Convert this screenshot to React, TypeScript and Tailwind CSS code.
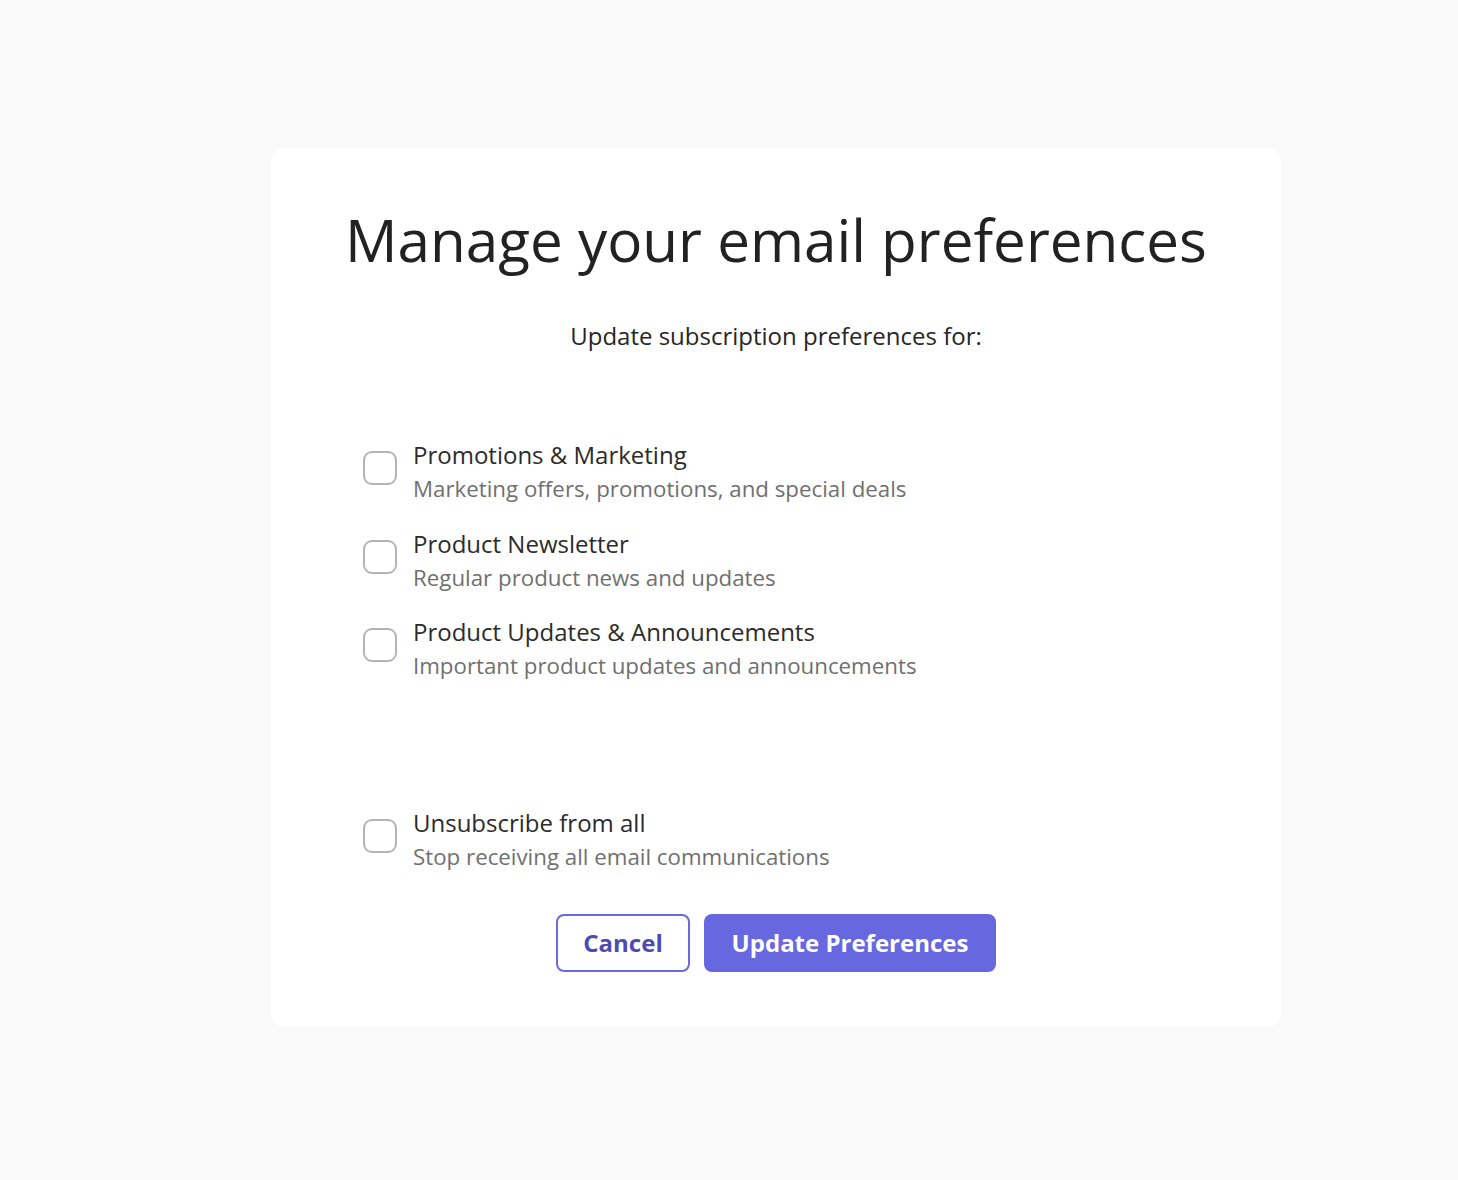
import React, { useState } from 'react';

type Pref = { id: string; title: string; description: string };

const PREFS: Pref[] = [
    { id: 'marketing', title: 'Promotions & Marketing', description: 'Marketing offers, promotions, and special deals' },
    { id: 'newsletter', title: 'Product Newsletter', description: 'Regular product news and updates' },
    { id: 'updates', title: 'Product Updates & Announcements', description: 'Important product updates and announcements' },
];

const PrefRow: React.FC<{ pref: Pref; checked: boolean; onToggle: () => void }> = ({ pref, checked, onToggle }) => (
    <label className="flex items-start gap-[16px] cursor-pointer">
        <input type="checkbox" className="sr-only" checked={checked} onChange={onToggle} />
        <span
            className={`mt-[13px] w-[34px] h-[34px] shrink-0 rounded-[9px] border-2 ${checked ? 'bg-[#6767e0] border-[#6767e0]' : 'bg-white border-[#b4b4b4]'}`}
        />
        <span className="flex flex-col">
            <span className="text-[24px] leading-[34px] text-[#2b2b2b]">{pref.title}</span>
            <span className="text-[22.3px] leading-[33px] text-[#707070]">{pref.description}</span>
        </span>
    </label>
);

const App: React.FC = () => {
    const [selected, setSelected] = useState<Record<string, boolean>>({});

    const toggle = (id: string) => setSelected(s => ({ ...s, [id]: !s[id] }));

    return (
        <div className="min-h-screen bg-[#f9f9f9] pt-[148px] pb-[153px]" style={{ fontFamily: '"Open Sans", "Noto Sans", sans-serif' }}>
            <div className="ml-[271px] w-[1010px] bg-white rounded-[14px] pt-[204px] relative pb-[55px] px-[92px]">
                <h1 className="absolute left-0 right-0 top-[56px] text-center text-[58.4px] leading-[72px] text-[#222] font-normal">
                    Manage your email preferences
                </h1>
                <p className="text-center text-[24px] leading-[32px] text-[#262626] -mt-[32px]">Update subscription preferences for:</p>

                <div className="mt-[86px] flex flex-col gap-[21.5px]">
                    {PREFS.map(p => (
                        <PrefRow key={p.id} pref={p} checked={!!selected[p.id]} onToggle={() => toggle(p.id)} />
                    ))}
                </div>

                <div className="mt-[124px]">
                    <PrefRow
                        pref={{ id: 'all', title: 'Unsubscribe from all', description: 'Stop receiving all email communications' }}
                        checked={!!selected.all}
                        onToggle={() => toggle('all')}
                    />
                </div>

                <div className="mt-[41px] flex justify-center gap-[14px]">
                    <button className="w-[134px] h-[58px] rounded-[8px] border-2 border-[#6b69e0] bg-white text-[#4d4ab4] text-[24px] font-bold">
                        Cancel
                    </button>
                    <button className="w-[292px] h-[58px] rounded-[8px] bg-[#6767e0] text-white text-[24px] font-bold">
                        Update Preferences
                    </button>
                </div>
            </div>
        </div>
    );
};

export default App;
